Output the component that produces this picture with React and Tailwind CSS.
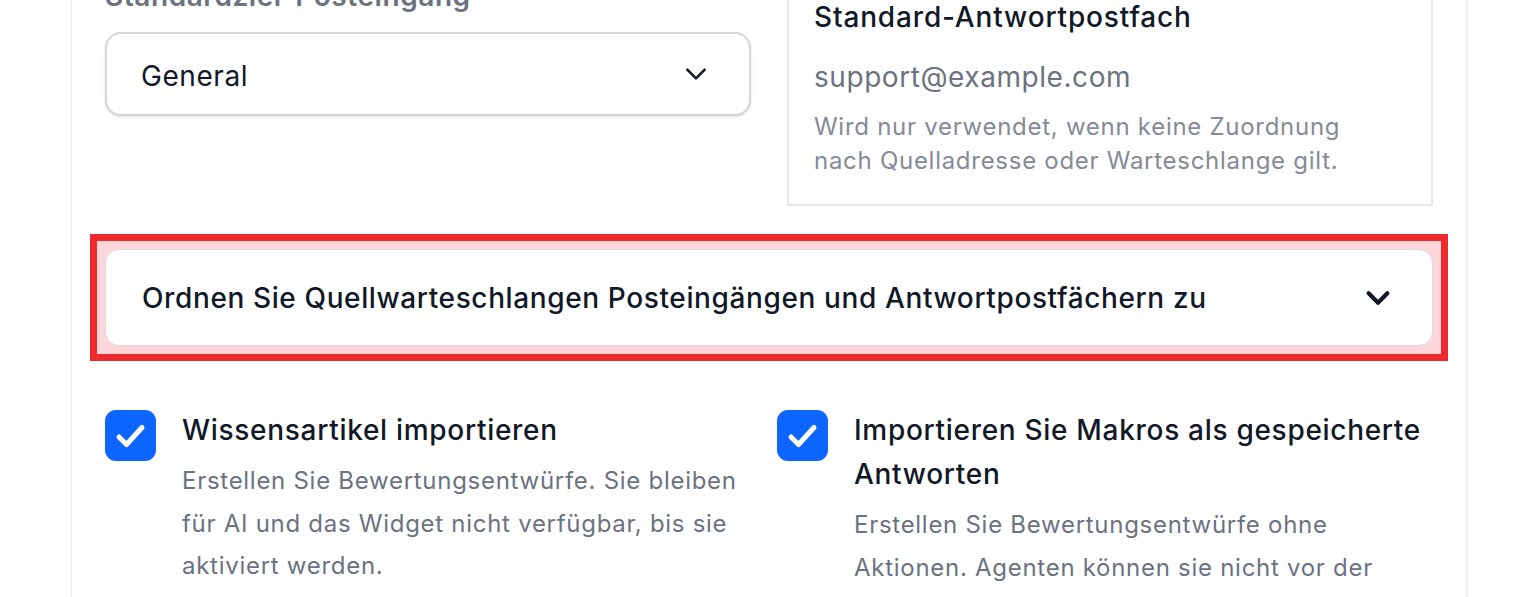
import React from 'react'

const Chevron = ({ className, strokeWidth }) => (
    <svg viewBox="0 0 24 24" className={className} fill="none" stroke="currentColor" strokeWidth={strokeWidth} strokeLinecap="round" strokeLinejoin="round">
        <polyline points="4,8 12,16 20,8" />
    </svg>
)

const Checkbox = () => (
    <div className="mt-[2px] flex h-[51px] w-[51px] shrink-0 items-center justify-center rounded-[11px] bg-[#0d66ff]">
        <svg viewBox="0 0 51 51" className="h-[51px] w-[51px]" fill="none" stroke="white" strokeWidth="5" strokeLinecap="round" strokeLinejoin="round">
            <polyline points="14,27 21.5,34.5 37,17.5" />
        </svg>
    </div>
)

const Option = ({ title, desc }) => (
    <div className="flex gap-[26px]">
        <Checkbox />
        <div>
            <div className="text-[28px] font-medium leading-[44px] tracking-[0.025em] text-[#111827]">{title}</div>
            <div className="mt-[8px] text-[24px] leading-[42.5px] tracking-[0.03em] text-[#6b7280]">{desc}</div>
        </div>
    </div>
)

const App = () => {
    return (
        <div className="h-[597px] overflow-hidden bg-white" style={{ fontFamily: 'Inter, "Noto Sans", sans-serif' }}>
            <div className="ml-[70px] -mt-[29px] w-[1398px] border-x-2 border-[#f1f2f4] px-[33px] pb-10">
                <div className="grid grid-cols-2 gap-x-[36px]">
                    <div className="pt-[5px]">
                        <div className="text-[28px] font-semibold leading-[40px] tracking-[0.02em] text-[#6b7280]">Standardziel-Posteingang</div>
                        <div className="mt-[16px] flex h-[84px] items-center justify-between rounded-[16px] border-2 border-[#d4d6da] bg-white pl-[34px] pr-[40px] shadow-sm">
                            <span className="pt-[3px] text-[28px] tracking-[0.02em] text-[#111827]">General</span>
                            <Chevron className="h-[26px] w-[26px] text-[#111827]" strokeWidth="2.4" />
                        </div>
                    </div>
                    <div className="border-2 border-[#e5e7eb] pl-[25px] pr-6 pt-[24px] pb-[26px]">
                        <div className="text-[28px] font-medium leading-[40px] tracking-[0.03em] text-[#111827]">Standard-Antwortpostfach</div>
                        <div className="mt-[20px] text-[28px] leading-[40px] tracking-[0.02em] text-[#6b7280]">support@example.com</div>
                        <div className="mt-[13px] text-[24px] leading-[34px] tracking-[0.03em] text-[#858a94]">
                            Wird nur verwendet, wenn keine Zuordnung<br />nach Quelladresse oder Warteschlange gilt.
                        </div>
                    </div>
                </div>

                <div className="-mx-[15px] mt-[28px] border-[7px] border-[#ee2a2e] bg-[#fdd7d7] p-[8px]">
                    <div className="flex h-[97px] items-center justify-between rounded-[14px] border border-[#d9dbe0] bg-white pl-[36px] pr-[40px]">
                        <span className="text-[28px] font-medium tracking-[0.022em] text-[#111827]">Ordnen Sie Quellwarteschlangen Posteingängen und Antwortpostfächern zu</span>
                        <Chevron className="h-[28px] w-[28px] text-[#111827]" strokeWidth="3.6" />
                    </div>
                </div>

                <div className="mt-[47px] grid grid-cols-[636px_1fr] gap-x-[36px]">
                    <Option
                        title="Wissensartikel importieren"
                        desc="Erstellen Sie Bewertungsentwürfe. Sie bleiben für AI und das Widget nicht verfügbar, bis sie aktiviert werden."
                    />
                    <Option
                        title="Importieren Sie Makros als gespeicherte Antworten"
                        desc="Erstellen Sie Bewertungsentwürfe ohne Aktionen. Agenten können sie nicht vor der Aktivierung verwenden."
                    />
                </div>
            </div>
        </div>
    )
}

export default App
